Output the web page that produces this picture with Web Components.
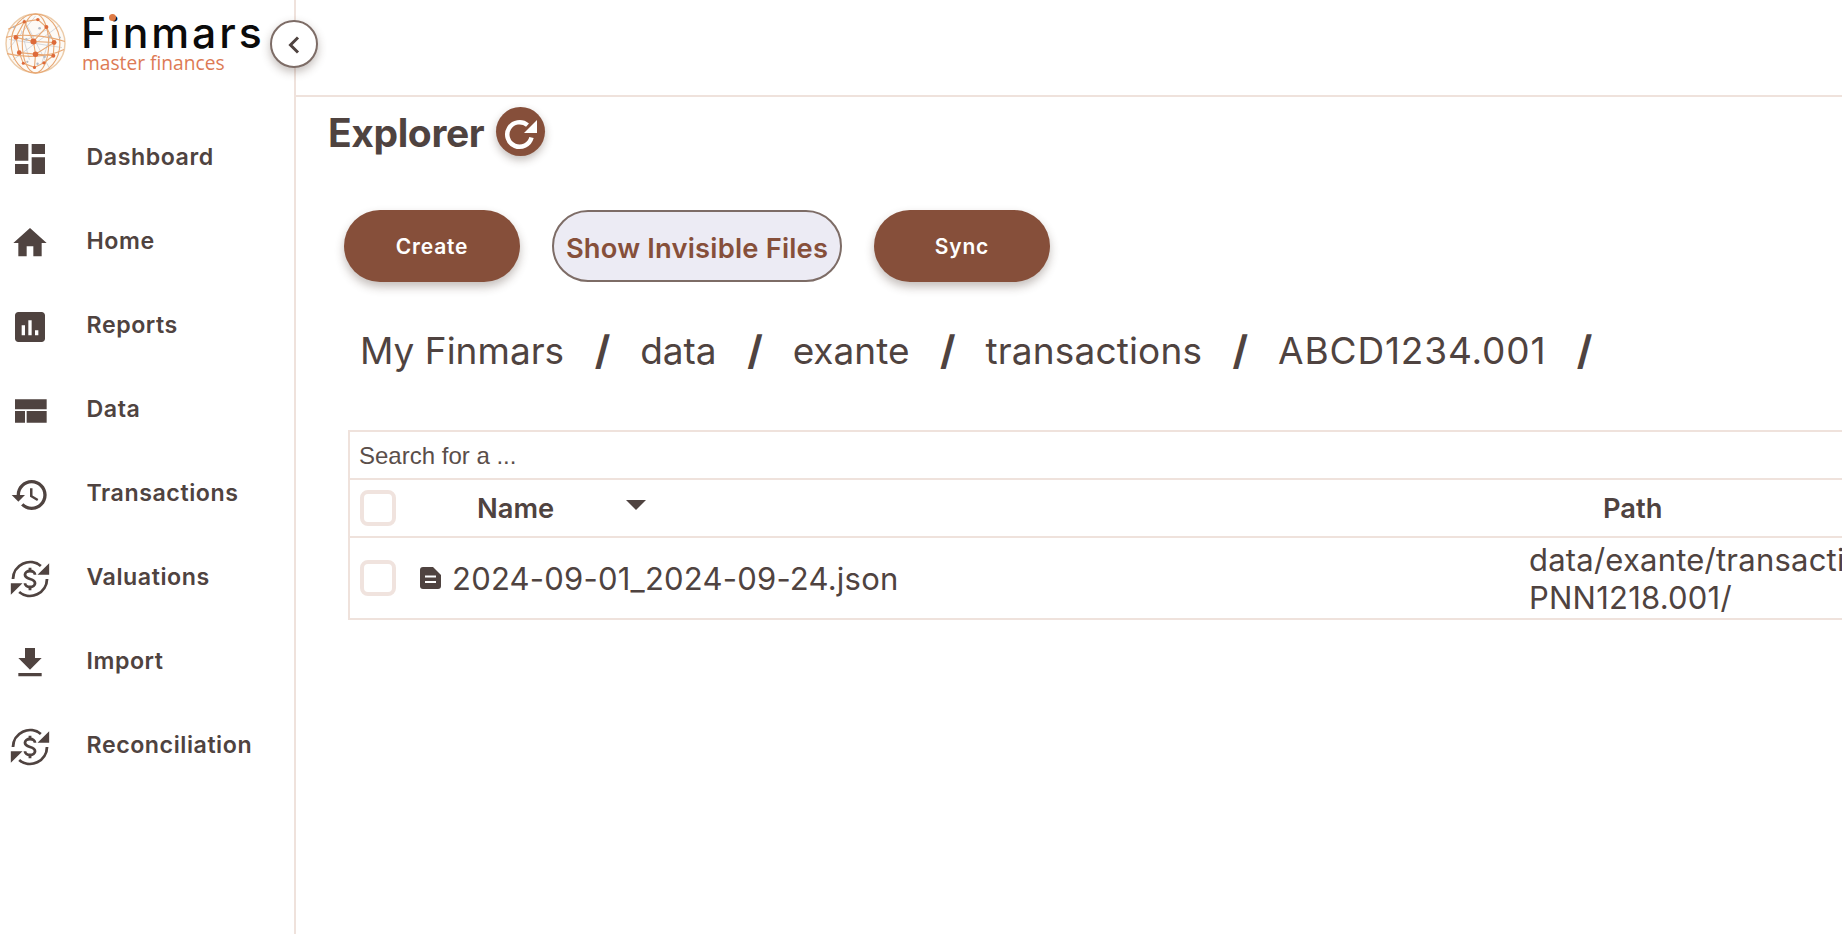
<!DOCTYPE html>
<html lang="en">
<head>
<meta charset="utf-8">
<title>Finmars Explorer</title>
<style>
  html, body { margin: 0; height: 100%; overflow: hidden; background: #fff; }
  body { font-family: Inter, "Liberation Sans", sans-serif; color: #4f4340; }
</style>
</head>
<body>
<fm-app>
  <fm-sidebar slot="side">
    <fm-nav-item icon="dashboard">Dashboard</fm-nav-item>
    <fm-nav-item icon="home">Home</fm-nav-item>
    <fm-nav-item icon="reports">Reports</fm-nav-item>
    <fm-nav-item icon="data">Data</fm-nav-item>
    <fm-nav-item icon="history">Transactions</fm-nav-item>
    <fm-nav-item icon="exchange">Valuations</fm-nav-item>
    <fm-nav-item icon="import">Import</fm-nav-item>
    <fm-nav-item icon="exchange">Reconciliation</fm-nav-item>
  </fm-sidebar>
  <fm-explorer>
    <fm-button slot="actions">Create</fm-button>
    <fm-button slot="actions" outline>Show Invisible Files</fm-button>
    <fm-button slot="actions">Sync</fm-button>
    <fm-breadcrumbs slot="crumbs" path="My Finmars,data,exante,transactions,ABCD1234.001"></fm-breadcrumbs>
    <fm-file-table slot="table"></fm-file-table>
  </fm-explorer>
</fm-app>

<script>
// material paths, same 24 box everywhere
const ICONS = {
  dashboard: '<path d="M3 13h8V3H3v10zm0 8h8v-6H3v6zm10 0h8V11h-8v10zm0-18v6h8V3h-8z"/>',
  home: '<path d="M10 20v-6h4v6h5v-8h3L12 3 2 12h3v8z"/>',
  reports: '<path d="M19 3H5c-1.1 0-2 .9-2 2v14c0 1.1.9 2 2 2h14c1.1 0 2-.9 2-2V5c0-1.1-.9-2-2-2zM9 17H7v-6h2v6zm4 0h-2V8h2v9zm4 0h-2v-3h2v3z"/>',
  data: '<path d="M3 5h19v6H3zM3 12h6v7H3zM10 12h12v7H10z"/>',
  history: '<path d="M13 3c-4.97 0-9 4.03-9 9H1l3.89 3.89.07.14L9 12H6c0-3.87 3.13-7 7-7s7 3.13 7 7-3.13 7-7 7c-1.93 0-3.68-.79-4.94-2.06l-1.42 1.42C8.27 19.99 10.51 21 13 21c4.97 0 9-4.03 9-9s-4.03-9-9-9zm-1 5v5l4.28 2.54.72-1.21-3.5-2.08V8H12z"/>',
  exchange: '<g fill="none" stroke="currentColor"><path stroke-width="1.7" d="M1.8 12A10.2 10.2 0 0 1 18.5 4.2"/><path stroke-width="1.7" d="M22.2 12A10.2 10.2 0 0 1 5.5 19.8"/><path stroke-width="1.7" d="M15 9.5c0-1.4-1.3-2.3-3-2.3s-3 .9-3 2.3c0 1.5 1.3 2 3 2.5s3 1 3 2.5c0 1.4-1.3 2.3-3 2.3s-3-.9-3-2.3"/><path stroke-width="1.7" d="M12 5.2v2M12 16.8v2"/></g><path d="M23.5 2.5v7h-7zM.5 21.5v-7h7z"/>',
  import: '<path d="M19 9h-4V3H9v6H5l7 7 7-7zM5 18v2h14v-2H5z"/>',
};

function define(name, css, html, setup) {
  customElements.define(name, class extends HTMLElement {
    connectedCallback() {
      if (this.shadowRoot) return;
      const root = this.attachShadow({ mode: 'open' });
      root.innerHTML = `<style>${css}</style>${typeof html === 'function' ? html(this) : html}`;
      if (setup) setup(root, this);
    }
  });
}

define('fm-app', `
  :host { display: grid; grid-template-columns: 296px 1fr; height: 934px; width: 1842px; overflow: hidden; }
`, `<slot name="side"></slot><slot></slot>`);

define('fm-logo', `
  :host { display: flex; align-items: flex-start; height: 97px; position: relative; box-sizing: border-box; padding: 13px 0 0 5px; }
  svg { width: 61px; height: 61px; flex: none; }
  .words { margin: 2px 0 0 15px; position: relative; }
  .name { font: 500 42.7px/36px Inter, sans-serif; letter-spacing: 2.9px; color: #0b0b0b; }
  .tag { font: 400 19.2px/20px "Open Sans", sans-serif; color: #dd7a55; margin: 2px 0 0 1px; }
  .dot { position: absolute; left: 28px; top: -1px; width: 7px; height: 7px; border-radius: 50%; background: #dd7a45; }
`, `
  <svg viewBox="0 0 60 60">
    <circle cx="30" cy="30" r="29" fill="#fdfaf6" stroke="#eccba8" stroke-width="1.4"/>
    <g fill="none" stroke="#c6cad0" stroke-width=".7">
      <path d="M4 26L56 34M8 46L54 12M18 5L44 55M3 36L30 3M22 26L42 16M16 17L24 46M36 50L44 24"/>
    </g>
    <g fill="none" stroke="#e8a874" stroke-width="1.1">
      <ellipse cx="30" cy="30" rx="13" ry="29"/>
      <ellipse cx="30" cy="30" rx="24" ry="29"/>
      <path d="M1 24C15 20 40 22 59 28M2 40C18 44 42 44 58 36"/>
      <path d="M10.7 24L28 28L48.3 29L30 40.5L14 39L10.7 24L19 8.5L28 28L30 40.5L29 53.5M19 8.5L32.3 6.5L40.7 13.8L48.3 29L47.5 42L30 40.5M40.7 13.8L28 28M14 39L18 49.5L29 53.5L38.3 49L47.5 42M3 16L19 8.5"/>
    </g>
    <g fill="#b4bac3">
      <circle cx="21" cy="26" r="1.3"/><circle cx="34" cy="15" r="1.3"/><circle cx="9" cy="14" r="1.1"/><circle cx="44" cy="23" r="1.2"/>
      <circle cx="39" cy="43" r="1.2"/><circle cx="22" cy="48" r="1.1"/><circle cx="32" cy="50" r="1.2"/><circle cx="54" cy="24" r="1"/>
    </g>
    <g fill="#dd6a3a">
      <circle cx="10.7" cy="24" r="2.3"/><circle cx="28" cy="28" r="3"/><circle cx="48.3" cy="29" r="2.4"/>
      <circle cx="14" cy="39" r="2.3"/><circle cx="30" cy="40.5" r="2.7"/><circle cx="47.5" cy="42" r="2"/>
      <circle cx="19" cy="8.5" r="1.7"/><circle cx="32.3" cy="6.5" r="1.7"/><circle cx="40.7" cy="13.8" r="2"/>
      <circle cx="18" cy="49.5" r="1.5"/><circle cx="29" cy="53.5" r="1.5"/><circle cx="38.3" cy="49" r="1.6"/>
    </g>
  </svg>
  <div class="words">
    <div class="name">Finmars</div>
    <div class="tag">master finances</div>
    <span class="dot"></span>
  </div>
`);

define('fm-sidebar', `
  :host { display: block; box-sizing: border-box; width: 296px; height: 934px; border-right: 2px solid #efe2dc; position: relative; }
  nav { display: flex; flex-direction: column; padding-top: 19px; }
  .collapse { position: absolute; left: 270px; top: 20px; width: 48px; height: 48px; box-sizing: border-box; border-radius: 50%;
    background: #fff; border: 2px solid #7d6c66; box-shadow: 0 4px 10px rgba(60,40,30,.3); display: flex; align-items: center; justify-content: center; z-index: 2; }
  .collapse svg { width: 20px; height: 20px; margin-top: 1px; }
`, `
  <fm-logo></fm-logo>
  <span class="collapse"><svg viewBox="0 0 20 20"><path d="M14 2.5L6.5 10l7.5 7.5" fill="none" stroke="#4f4340" stroke-width="3"/></svg></span>
  <nav><slot></slot></nav>
`);

define('fm-nav-item', `
  :host { display: flex; align-items: center; height: 84px; color: #4f4340; }
  svg { width: 40px; height: 40px; margin: 1px 0 0 10px; flex: none; fill: currentColor; }
  span { margin-left: 36.5px; font: 600 23.2px/1 Inter, sans-serif; letter-spacing: .55px; }
`, (el) => `<svg viewBox="0 0 24 24">${ICONS[el.getAttribute('icon')]}</svg><span><slot></slot></span>`);

define('fm-explorer', `
  :host { display: block; min-width: 0; overflow: hidden; }
  .top { height: 97px; box-sizing: border-box; border-bottom: 2px solid #efe2dc; }
  .head { display: flex; align-items: center; height: 70px; padding-left: 32px; }
  h1 { margin: 0; font: 700 39px/1 Inter, sans-serif; letter-spacing: -.4px; color: #4f4340; }
  .refresh { width: 49px; height: 49px; margin: -2px 0 0 12px; border-radius: 50%; background: #864f3a; box-shadow: 0 4px 8px rgba(60,40,30,.3); }
  .refresh svg { display: block; width: 49px; height: 49px; }
  .actions { display: flex; gap: 32px; padding: 43px 0 0 48px; }
  .crumbs { padding: 44px 0 0 64px; }
  .table { padding: 54px 0 0 52px; }
`, `
  <div class="top"></div>
  <div class="head"><h1>Explorer</h1><span class="refresh"><svg viewBox="0 0 49 49">
    <path d="M31.5 18.1A12.3 12.3 0 1 0 35.5 30.5" fill="none" stroke="#fff" stroke-width="4.5"/>
    <path d="M41 13v13H28z" fill="#fff"/>
  </svg></span></div>
  <div class="actions"><slot name="actions"></slot></div>
  <div class="crumbs"><slot name="crumbs"></slot></div>
  <div class="table"><slot name="table"></slot></div>
`);

define('fm-button', `
  :host { display: inline-flex; align-items: center; justify-content: center; box-sizing: border-box; width: 176px; height: 72px; border-radius: 36px;
    background: #864f3a; color: #fff; font: 600 21px/1 Inter, sans-serif; letter-spacing: .8px; box-shadow: 0 5px 10px rgba(60,40,30,.3); }
  :host([outline]) { width: 290px; background: #ecebf4; color: #864f3a; border: 2px solid #7d6c66; font-size: 27.3px; letter-spacing: .2px; box-shadow: none; padding-top: 5px; }
`, `<slot></slot>`);

define('fm-breadcrumbs', `
  :host { display: flex; align-items: center; gap: 32px; height: 50px; font: 400 37px/50px Inter, sans-serif; color: #4f4340; letter-spacing: 0; white-space: nowrap; }
  b { font-weight: 700; font-size: 40px; width: 12px; text-align: center; margin-left: -1.5px; margin-right: 1.5px; }
  span:nth-of-type(4) { letter-spacing: .15px; }
  span:last-of-type { letter-spacing: .85px; }
`, (el) => el.getAttribute('path').split(',').map(p => `<span>${p}</span><b>/</b>`).join(''));

define('fm-file-table', `
  :host { display: block; width: 2000px; box-sizing: border-box; border: 2px solid #efe2dc; font-family: Inter, sans-serif; color: #4f4340; }
  .search { height: 46px; box-sizing: border-box; padding: 2px 0 0 9px; display: flex; align-items: center; font: 400 24px/1 "Liberation Sans", sans-serif; color: #5a4e4a; }
  .row { display: grid; grid-template-columns: 1178px 400px; border-top: 2px solid #efe2dc; align-items: center; }
  .head { height: 56px; font: 600 27.3px/1 Inter, sans-serif; }
  .body { height: 80px; font: 400 31px/38px Inter, sans-serif; letter-spacing: .22px; }
  .cell { display: flex; align-items: center; padding-left: 10px; }
  .box { width: 36px; height: 36px; box-sizing: border-box; border: 4px solid #f0e3de; border-radius: 8px; flex: none; }
  .name { margin: 2px 0 0 81px; }
  .sort { width: 0; height: 0; margin: -6px 0 0 72px; border: 10.5px solid transparent; border-top-color: #4f4340; border-bottom: 0; }
  .file { width: 22px; height: 22px; margin-left: 24px; flex: none; }
  .fname { margin-left: 10px; white-space: nowrap; margin-top: 2px; }
  .path-h { padding-left: 75px; margin-top: 2px; }
  .path { padding-left: 1px; margin-top: 2px; }
`, `
  <div class="search">Search for a ...</div>
  <div class="row head">
    <div class="cell"><span class="box"></span><span class="name">Name</span><span class="sort"></span></div>
    <div class="path-h">Path</div>
  </div>
  <div class="row body">
    <div class="cell"><span class="box"></span><svg class="file" viewBox="0 0 22 22"><path d="M3 0h10l8 8v11a3 3 0 0 1-3 3H3a3 3 0 0 1-3-3V3a3 3 0 0 1 3-3z" fill="#4f4340"/><path d="M5 9.5h11M5 15h11" stroke="#fff" stroke-width="2.2"/></svg><span class="fname">2024-09-01_2024-09-24.json</span></div>
    <div class="path">data/exante/transactions/<wbr>PNN1218.001/</div>
  </div>
`);
</script>
</body>
</html>
